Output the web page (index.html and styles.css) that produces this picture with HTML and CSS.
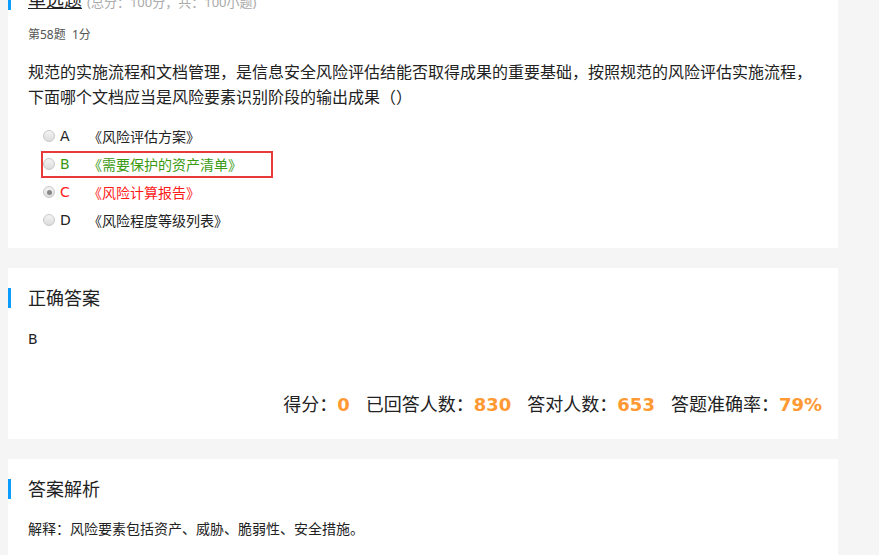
FILE: index.html
```html
<!DOCTYPE html>
<html lang="zh-CN">
<head>
<meta charset="utf-8">
<title>单选题</title>
<link rel="stylesheet" href="styles.css">
</head>
<body>
<div class="page">
  <section class="card card-question">
    <h2 class="card-title"><span class="title-link">单选题</span><span class="title-note">(总分：100分，共：100小题)</span></h2>
    <div class="card-body">
      <div class="q-meta">第58题&nbsp;&nbsp;1分</div>
      <div class="q-text">规范的实施流程和文档管理，是信息安全风险评估结能否取得成果的重要基础，按照规范的风险评估实施流程，<br>下面哪个文档应当是风险要素识别阶段的输出成果（）</div>
      <ul class="options">
        <li class="option"><span class="opt-box"><span class="radio"></span><span class="opt-letter">A</span><span class="opt-text">《风险评估方案》</span></span></li>
        <li class="option option-right"><span class="opt-box"><span class="radio"></span><span class="opt-letter">B</span><span class="opt-text">《需要保护的资产清单》</span></span></li>
        <li class="option option-wrong"><span class="opt-box"><span class="radio radio-checked"></span><span class="opt-letter">C</span><span class="opt-text">《风险计算报告》</span></span></li>
        <li class="option"><span class="opt-box"><span class="radio"></span><span class="opt-letter">D</span><span class="opt-text">《风险程度等级列表》</span></span></li>
      </ul>
    </div>
  </section>

  <section class="card card-answer">
    <h2 class="card-title">正确答案</h2>
    <div class="card-body">
      <div class="answer">B</div>
      <div class="stats">
        <span class="stat">得分：<b class="num">0</b></span>
        <span class="stat">已回答人数：<b class="num">830</b></span>
        <span class="stat">答对人数：<b class="num">653</b></span>
        <span class="stat">答题准确率：<b class="num">79%</b></span>
      </div>
    </div>
  </section>

  <section class="card card-analysis">
    <h2 class="card-title">答案解析</h2>
    <div class="card-body">
      <div class="analysis">解释：风险要素包括资产、威胁、脆弱性、安全措施。</div>
    </div>
  </section>
</div>
</body>
</html>
```

FILE: styles.css
```css
* { box-sizing: border-box; }

html, body {
  margin: 0;
  padding: 0;
  background: #f5f5f5;
  font-family: "Noto Sans", "Noto Sans CJK SC", sans-serif;
  color: #222;
  overflow: hidden;
}

.page {
  width: 830px;
  margin: -30px 0 0 8px;
  display: flex;
  flex-direction: column;
  gap: 20px;
}

.card {
  background: #fff;
  padding-top: 20px;
}

.card-title {
  margin: 0;
  height: 20px;
  line-height: 20px;
  font-size: 18px;
  font-weight: normal;
  color: #222;
  border-left: 3px solid #0a9cff;
  padding-left: 17px;
  white-space: nowrap;
}

.title-link {
  text-decoration: underline;
  text-underline-offset: 1px;
}

.title-note {
  font-size: 13px;
  color: #aaa;
  margin-left: 5px;
}

.card-body {
  padding: 0 16px 0 20px;
}

.card-question .card-body { padding-bottom: 14px; }

.q-meta {
  margin-top: 15px;
  font-size: 12px;
  line-height: 20px;
  color: #555;
}

.q-text {
  margin-top: 15px;
  font-size: 16px;
  line-height: 25px;
  color: #222;
  white-space: nowrap;
}

.options {
  list-style: none;
  margin: 12px 0 0 0;
  padding: 0;
}

.option {
  height: 28px;
  display: flex;
  align-items: center;
  padding-left: 13px;
}

.opt-box {
  display: inline-flex;
  align-items: center;
  height: 27px;
  border: 2px solid transparent;
  padding-right: 29px;
  font-size: 14px;
  color: #222;
}

.radio {
  width: 12px;
  height: 12px;
  border-radius: 50%;
  border: 1px solid #c8c8c8;
  background: linear-gradient(#f4f4f4, #dcdcdc);
  display: flex;
  align-items: center;
  justify-content: center;
}

.radio-checked::after {
  content: "";
  width: 5px;
  height: 5px;
  border-radius: 50%;
  background: #888;
}

.opt-letter {
  width: 33px;
  padding-left: 5px;
  font-family: "DejaVu Sans", "Noto Sans", sans-serif;
  font-size: 14px;
}

.opt-text { white-space: nowrap; }

.option-right .opt-box {
  border-color: #e8393b;
  color: #3a9a12;
}

.option-wrong .opt-box { color: #ff1a1a; }

.answer {
  margin-top: 21px;
  font-size: 14px;
  line-height: 20px;
  font-family: "DejaVu Sans", sans-serif;
}

.stats {
  margin-top: 41px;
  padding-bottom: 20px;
  display: flex;
  justify-content: flex-end;
  gap: 16px;
  font-size: 18px;
  line-height: 29px;
  color: #222;
}

.num {
  color: #ff9933;
  font-family: "DejaVu Sans", sans-serif;
  font-weight: bold;
  font-size: 18px;
}

.analysis {
  margin-top: 20px;
  font-size: 14px;
  line-height: 20px;
  color: #222;
  padding-bottom: 20px;
}
```
